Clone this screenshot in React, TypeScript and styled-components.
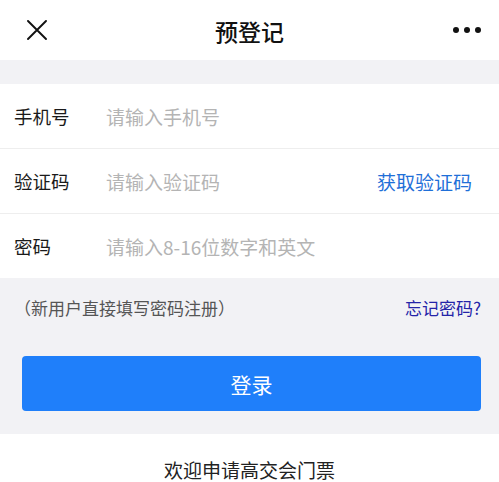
import React from 'react';
import styled, { createGlobalStyle } from 'styled-components';

const GlobalStyle = createGlobalStyle`
  html, body {
    margin: 0;
    padding: 0;
    background: #ffffff;
  }
  body {
    font-family: "Noto Sans CJK SC", "Noto Sans", sans-serif;
    color: #1a1a1a;
  }
  * {
    box-sizing: border-box;
  }
`;

const Page = styled.div`
  width: 499px;
  min-height: 482px;
  display: flex;
  flex-direction: column;
  background: #ffffff;
`;

const Header = styled.div`
  height: 60px;
  display: grid;
  grid-template-columns: 1fr auto 1fr;
  align-items: center;
  padding: 0 18px 0 27px;
  background: #ffffff;
`;

const Title = styled.div`
  font-size: 23px;
  font-weight: 500;
  color: #111111;
  line-height: 1;
  margin-top: 2px;
  margin-left: -9px;
`;

const IconButton = styled.div`
  height: 30px;
  display: flex;
  align-items: center;
`;

const CloseIcon = styled(IconButton)`
  justify-content: flex-start;
`;

const MoreIcon = styled(IconButton)`
  justify-content: flex-end;
`;

const Spacer = styled.div`
  height: 24px;
  background: #f2f2f5;
`;

const Form = styled.div`
  display: flex;
  flex-direction: column;
  background: #ffffff;
`;

const Row = styled.div<{ $last?: boolean }>`
  height: ${p => (p.$last ? '64px' : '65px')};
  display: flex;
  align-items: center;
  padding: 0 27px 0 14px;
  border-bottom: ${p => (p.$last ? 'none' : '1px solid #eeeeee')};
`;

const Label = styled.div`
  width: 92px;
  font-size: 18.5px;
  color: #1a1a1a;
  flex-shrink: 0;
`;

const Input = styled.input`
  flex: 1;
  min-width: 0;
  border: none;
  outline: none;
  background: transparent;
  padding: 0;
  font-family: inherit;
  font-size: 19px;
  color: #1a1a1a;

  &::placeholder {
    color: #b4b4b4;
  }
`;

const CodeLink = styled.div`
  font-size: 19px;
  color: #1f6fd8;
  flex-shrink: 0;
`;

const Gray = styled.div`
  background: #f2f2f5;
  padding: 0 18px 23px 22px;
  display: flex;
  flex-direction: column;
`;

const HintRow = styled.div`
  height: 58px;
  display: flex;
  align-items: center;
  justify-content: space-between;
  margin-left: -8px;
`;

const Hint = styled.div`
  font-size: 17px;
  color: #555555;
`;

const Forgot = styled.div`
  font-size: 17px;
  color: #2424a8;
`;

const LoginButton = styled.button`
  margin-top: 20px;
  width: 459px;
  height: 55px;
  border: none;
  border-radius: 4px;
  background: #1f7ffa;
  color: #ffffff;
  font-family: inherit;
  font-size: 21px;
  cursor: pointer;
`;

const Footer = styled.div`
  padding-top: 24px;
  height: 49px;
  text-align: center;
  font-size: 19px;
  line-height: 24px;
  color: #222222;
`;

const App: React.FC = () => {
  return (
    <Page>
      <GlobalStyle />
      <Header>
        <CloseIcon>
          <svg width="20" height="20" viewBox="0 0 20 20">
            <path d="M1 1L19 19M19 1L1 19" stroke="#111" strokeWidth="1.9" strokeLinecap="round" />
          </svg>
        </CloseIcon>
        <Title>预登记</Title>
        <MoreIcon>
          <svg width="28" height="8" viewBox="0 0 28 8">
            <circle cx="3" cy="4" r="3" fill="#111" />
            <circle cx="14" cy="4" r="3" fill="#111" />
            <circle cx="25" cy="4" r="3" fill="#111" />
          </svg>
        </MoreIcon>
      </Header>
      <Spacer />
      <Form>
        <Row>
          <Label>手机号</Label>
          <Input placeholder="请输入手机号" />
        </Row>
        <Row>
          <Label>验证码</Label>
          <Input placeholder="请输入验证码" />
          <CodeLink>获取验证码</CodeLink>
        </Row>
        <Row $last>
          <Label>密码</Label>
          <Input type="password" placeholder="请输入8-16位数字和英文" />
        </Row>
      </Form>
      <Gray>
        <HintRow>
          <Hint>（新用户直接填写密码注册）</Hint>
          <Forgot>忘记密码?</Forgot>
        </HintRow>
        <LoginButton>登录</LoginButton>
      </Gray>
      <Footer>欢迎申请高交会门票</Footer>
    </Page>
  );
};

export default App;
